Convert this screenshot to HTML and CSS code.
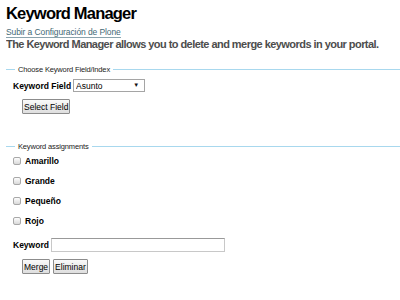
FILE: index.html
```html
<!DOCTYPE html>
<html lang="es">
<head>
  <meta charset="UTF-8" />
  <title>Keyword Manager</title>
  <link rel="stylesheet" href="styles.css">
</head>
<body>
  <h1 class="titulo">Keyword Manager</h1>
  <a href="#" class="link-arriba">Subir a Configuración de Plone</a>
  <p class="descripcion">The Keyword Manager allows you to delete and merge keywords in your portal.</p>

  <form>
    <fieldset class="grupo">
      <legend>Choose Keyword Field/Index</legend>
      <div class="fila">
        <label class="etiqueta" for="campo">Keyword Field</label>
        <span class="selector-caja">
          <select id="campo" class="selector">
            <option>Asunto</option>
          </select>
        </span>
      </div>
      <div class="botones">
        <button type="button" class="boton">Select Field</button>
      </div>
    </fieldset>

    <fieldset class="grupo grupo-asignaciones">
      <legend>Keyword assignments</legend>
      <div class="check"><input type="checkbox" id="k1"><label for="k1">Amarillo</label></div>
      <div class="check"><input type="checkbox" id="k2"><label for="k2">Grande</label></div>
      <div class="check"><input type="checkbox" id="k3"><label for="k3">Pequeño</label></div>
      <div class="check"><input type="checkbox" id="k4"><label for="k4">Rojo</label></div>
      <div class="fila fila-keyword">
        <label class="etiqueta" for="kw">Keyword</label>
        <input type="text" id="kw" class="texto">
      </div>
      <div class="botones">
        <button type="button" class="boton">Merge</button>
        <button type="button" class="boton">Eliminar</button>
      </div>
    </fieldset>
  </form>
</body>
</html>
```

FILE: styles.css
```css
:root {
  --texto: #000;
  --gris: #4d4d4d;
  --enlace: #436976;
  --linea: #a8d8ee;
}

body {
  margin: 0 0 0 6px;
  font-family: 'Liberation Sans', Arial, sans-serif;
  font-size: 8.5px;
  color: var(--texto);
  background: #fff;
}

.titulo {
  margin: 3px 0 0 0;
  font-size: 16.5px;
  line-height: 20px;
  letter-spacing: -0.8px;
  font-weight: bold;
}

.link-arriba {
  display: inline-block;
  margin-top: 5px;
  font-size: 8.5px;
  line-height: 9px;
  letter-spacing: -0.1px;
  color: var(--enlace);
  text-decoration: none;
  border-bottom: 1px solid #8aa3ad;
}

.descripcion {
  margin: 0;
  font-size: 11px;
  line-height: 12px;
  letter-spacing: -0.55px;
  font-weight: bold;
  white-space: nowrap;
  color: var(--gris);
}

.grupo {
  margin: 15px 0 0 0;
  padding: 5px 0 0 7px;
  border: none;
  border-top: 1px solid var(--linea);
}

.grupo legend {
  margin-left: 2px;
  padding: 0 3px;
  font-size: 7.5px;
  letter-spacing: -0.15px;
  color: #222;
}

.fila {
  display: flex;
  align-items: center;
  gap: 2px;
}

.etiqueta {
  font-size: 8.5px;
  font-weight: bold;
}

.selector-caja {
  position: relative;
  display: inline-block;
}

.selector-caja::after {
  content: "▼";
  position: absolute;
  right: 6px;
  top: 3px;
  font-size: 6px;
  color: #111;
  pointer-events: none;
}

.selector {
  appearance: none;
  -webkit-appearance: none;
  display: block;
  width: 72px;
  height: 13px;
  padding: 0 2px;
  font-family: inherit;
  font-size: 8.5px;
  border: 1px solid #a5a5a5;
  border-radius: 0;
  background: #fff;
  color: #000;
}

.botones {
  display: flex;
  gap: 3px;
  margin: 7px 0 0 9px;
}

.boton {
  height: 15px;
  padding: 0 1px;
  font-family: inherit;
  font-size: 8.5px;
  background: linear-gradient(#fafafa, #dedede);
  border: 1px solid #8c8c8c;
  border-radius: 1px;
  color: #000;
}

.grupo-asignaciones {
  margin-top: 28px;
  padding-top: 0;
}

.check {
  display: flex;
  align-items: center;
  gap: 4px;
  margin: 5px 0 10px 0;
  font-size: 8.5px;
  font-weight: bold;
}

.check input {
  appearance: none;
  -webkit-appearance: none;
  width: 8px;
  height: 8px;
  margin: 0 0 1px 0;
  border: 1px solid #a8a8a8;
  border-radius: 2px;
  background: linear-gradient(#fdfdfd, #d9d9d9);
}

.fila-keyword {
  margin-top: 12px;
}

.texto {
  width: 170px;
  height: 10px;
  padding: 1px;
  border: 1px solid #c8c8c8;
  border-top-color: #999;
}
```
